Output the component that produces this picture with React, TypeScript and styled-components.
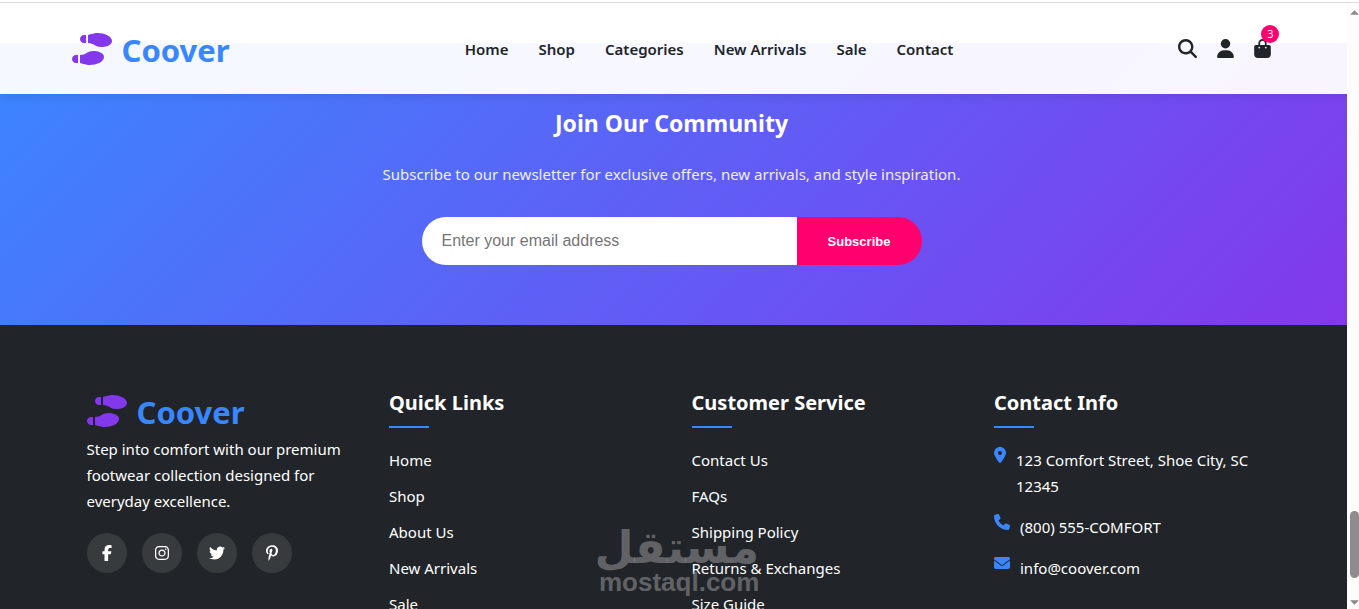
import React from "react";
import styled, { createGlobalStyle } from "styled-components";
import {
  FaBagShopping,
  FaEnvelope,
  FaFacebookF,
  FaInstagram,
  FaLocationDot,
  FaMagnifyingGlass,
  FaPhone,
  FaPinterestP,
  FaShoePrints,
  FaTwitter,
  FaUser,
} from "react-icons/fa6";

const colors = {
  primary: "#3a86ff",
  secondary: "#8338ec",
  accent: "#ff006e",
  dark: "#212529",
};

const GlobalStyle = createGlobalStyle`
  * { box-sizing: border-box; margin: 0; padding: 0; }
  body {
    font-family: "Segoe UI", "Noto Sans", "Open Sans", sans-serif;
    font-size: 15px;
    line-height: 26px;
    color: ${colors.dark};
    background: #fff;
    overflow: hidden;
  }
  a { color: inherit; text-decoration: none; }
  ul { list-style: none; }
`;

const Window = styled.div`
  display: flex;
  height: 100vh;
  overflow: hidden;
  border-top: 2px solid #fff;
`;

const Page = styled.div`
  position: relative;
  flex: 1;
  min-width: 0;
  overflow: hidden;
  border-top: 1px solid #dcdcdc;
`;

const Container = styled.div`
  width: 100%;
  max-width: 1200px;
  margin: 0 auto;
`;

const Header = styled.header`
  position: absolute;
  inset: 0 0 auto;
  z-index: 10;
  padding: 20px 4px 20px 0;
  background: rgba(255, 255, 255, 0.95);
  box-shadow: 0 2px 10px rgba(0, 0, 0, 0.1);
`;

const HeaderRow = styled(Container)`
  display: flex;
  align-items: center;
  justify-content: space-between;
`;

const Logo = styled.a`
  display: flex;
  align-items: center;
  gap: 10px;
  height: 51px;
  padding-right: 10px;
  font-size: 31px;
  font-weight: 700;
  color: ${colors.primary};

  svg {
    width: 40px;
    height: 32px;
    color: ${colors.secondary};
  }

  span {
    padding-top: 3px;
  }
`;

const Nav = styled.nav`
  display: flex;
  gap: 30px;
  font-weight: 600;
`;

const Actions = styled.div`
  display: flex;
  align-items: center;
  gap: 20px;
`;

const IconButton = styled.button<{ $width: number }>`
  position: relative;
  display: flex;
  width: ${({ $width }) => $width}px;
  border: 0;
  background: none;
  color: ${colors.dark};
  cursor: pointer;

  svg {
    width: 100%;
    height: 19px;
  }
`;

const Badge = styled.span`
  position: absolute;
  top: -14px;
  right: -8px;
  width: 18px;
  height: 18px;
  border-radius: 50%;
  background: ${colors.accent};
  color: #fff;
  font: 11px/18px "Segoe UI", "Noto Sans", sans-serif;
  text-align: center;
`;

const Newsletter = styled.section`
  margin-top: 40px;
  padding: 60px 4px 60px 0;
  background: linear-gradient(135deg, ${colors.primary}, ${colors.secondary});
  color: #fff;
  text-align: center;

  h2 {
    margin-bottom: 18px;
    font-size: 23px;
    line-height: 40px;
  }

  p {
    margin-bottom: 30px;
    opacity: 0.9;
  }
`;

const SubscribeForm = styled.form`
  display: flex;
  max-width: 500px;
  height: 48px;
  margin: 0 auto;
`;

const EmailInput = styled.input`
  flex: 1;
  min-width: 0;
  padding: 0 20px;
  border: 0;
  border-radius: 24px 0 0 24px;
  background: #fff;
  font: 16px "Liberation Sans", Arial, sans-serif;

  &::placeholder { color: #757575; }
`;

const SubscribeButton = styled.button`
  width: 125px;
  border: 0;
  border-radius: 0 24px 24px 0;
  background: ${colors.accent};
  color: #fff;
  font: 700 13px "Liberation Sans", Arial, sans-serif;
  cursor: pointer;
`;

const Footer = styled.footer`
  min-height: 100vh;
  padding: 60px 4px 20px 0;
  background: ${colors.dark};
  color: #fff;

  ${Logo} {
    height: 51px;
  }
`;

const FooterGrid = styled(Container)`
  display: grid;
  grid-template-columns: repeat(4, 1fr);
  gap: 40px;
  padding: 0 15px;
`;

const SocialLinks = styled.div`
  display: flex;
  gap: 15px;
  margin-top: 19px;
`;

const SocialLink = styled.a`
  display: grid;
  place-items: center;
  width: 40px;
  height: 40px;
  border-radius: 50%;
  background: rgba(255, 255, 255, 0.1);
  font-size: 16px;
`;

const FooterTitle = styled.h3`
  margin-bottom: 19px;
  font-size: 20px;
  line-height: 35px;

  &::after {
    content: "";
    display: block;
    width: 40px;
    height: 2px;
    margin-top: 6px;
    background: ${colors.primary};
  }
`;

const LinkList = styled.ul`
  display: grid;
  gap: 10px;
`;

const ContactList = styled.ul`
  display: grid;
  gap: 15px;

  li {
    display: flex;
    align-items: flex-start;
    gap: 10px;
  }

  svg {
    flex: none;
    font-size: 16px;
    color: ${colors.primary};
  }
`;

const PinIcon = styled(FaLocationDot)`
  width: 12px;
`;

const Watermark = styled.div`
  position: absolute;
  left: 599px;
  top: 517px;
  width: 160px;
  color: rgba(140, 140, 144, 0.62);
  text-align: center;
  font-weight: 700;
  white-space: nowrap;
  pointer-events: none;
`;

const WatermarkArabic = styled.div`
  font-family: "DejaVu Sans", sans-serif;
  font-size: 45px;
  line-height: 56px;
`;

const WatermarkDomain = styled.div`
  margin-top: -6px;
  font-family: "Liberation Sans", Arial, sans-serif;
  font-size: 26px;
  line-height: 24px;
`;

const Scrollbar = styled.div`
  display: flex;
  flex-direction: column;
  align-items: flex-end;
  width: 12px;
  padding: 7px 0 4px;
  background: #fcfcfc;
  border-top: 1px solid #dcdcdc;
`;

const Arrow = styled.svg`
  width: 9px;
  height: 5px;
  fill: #8b898b;
`;

const Thumb = styled.div`
  width: 9px;
  height: 67px;
  margin: auto 0 22px;
  border-radius: 5px;
  background: #8f8c8f;
`;

const navLinks = ["Home", "Shop", "Categories", "New Arrivals", "Sale", "Contact"];

const linkColumns = [
  { title: "Quick Links", links: ["Home", "Shop", "About Us", "New Arrivals", "Sale"] },
  {
    title: "Customer Service",
    links: ["Contact Us", "FAQs", "Shipping Policy", "Returns & Exchanges", "Size Guide"],
  },
];

const socials = [
  { label: "Facebook", Icon: FaFacebookF },
  { label: "Instagram", Icon: FaInstagram },
  { label: "Twitter", Icon: FaTwitter },
  { label: "Pinterest", Icon: FaPinterestP },
];

function Brand() {
  return (
    <Logo href="#">
      <FaShoePrints />
      <span>Coover</span>
    </Logo>
  );
}

export default function App() {
  return (
    <>
      <GlobalStyle />
      <Window>
        <Page>
          <Header>
            <HeaderRow>
              <Brand />
              <Nav>
                {navLinks.map((name) => (
                  <a href="#" key={name}>{name}</a>
                ))}
              </Nav>
              <Actions>
                <IconButton $width={19} aria-label="Search"><FaMagnifyingGlass /></IconButton>
                <IconButton $width={17} aria-label="Account"><FaUser /></IconButton>
                <IconButton $width={17} aria-label="Cart">
                  <FaBagShopping />
                  <Badge>3</Badge>
                </IconButton>
              </Actions>
            </HeaderRow>
          </Header>

          <Newsletter>
            <h2>Join Our Community</h2>
            <p>Subscribe to our newsletter for exclusive offers, new arrivals, and style inspiration.</p>
            <SubscribeForm>
              <EmailInput type="email" placeholder="Enter your email address" aria-label="Email address" />
              <SubscribeButton type="submit">Subscribe</SubscribeButton>
            </SubscribeForm>
          </Newsletter>

          <Footer>
            <FooterGrid>
              <div>
                <Brand />
                <p>Step into comfort with our premium footwear collection designed for everyday excellence.</p>
                <SocialLinks>
                  {socials.map(({ label, Icon }) => (
                    <SocialLink href="#" aria-label={label} key={label}><Icon /></SocialLink>
                  ))}
                </SocialLinks>
              </div>
              {linkColumns.map(({ title, links }) => (
                <div key={title}>
                  <FooterTitle>{title}</FooterTitle>
                  <LinkList>
                    {links.map((name) => (
                      <li key={name}><a href="#">{name}</a></li>
                    ))}
                  </LinkList>
                </div>
              ))}
              <div>
                <FooterTitle>Contact Info</FooterTitle>
                <ContactList>
                  <li><PinIcon /><span>123 Comfort Street, Shoe City, SC 12345</span></li>
                  <li><FaPhone /><span>(800) 555-COMFORT</span></li>
                  <li><FaEnvelope /><span>info@coover.com</span></li>
                </ContactList>
              </div>
            </FooterGrid>
          </Footer>

          <Watermark>
            <WatermarkArabic lang="ar" dir="rtl">مستقل</WatermarkArabic>
            <WatermarkDomain>mostaql.com</WatermarkDomain>
          </Watermark>
        </Page>
        <Scrollbar aria-hidden="true">
          <Arrow viewBox="0 0 10 5"><path d="M5 0L10 5H0Z" /></Arrow>
          <Thumb />
          <Arrow viewBox="0 0 10 5"><path d="M0 0H10L5 5Z" /></Arrow>
        </Scrollbar>
      </Window>
    </>
  );
}
